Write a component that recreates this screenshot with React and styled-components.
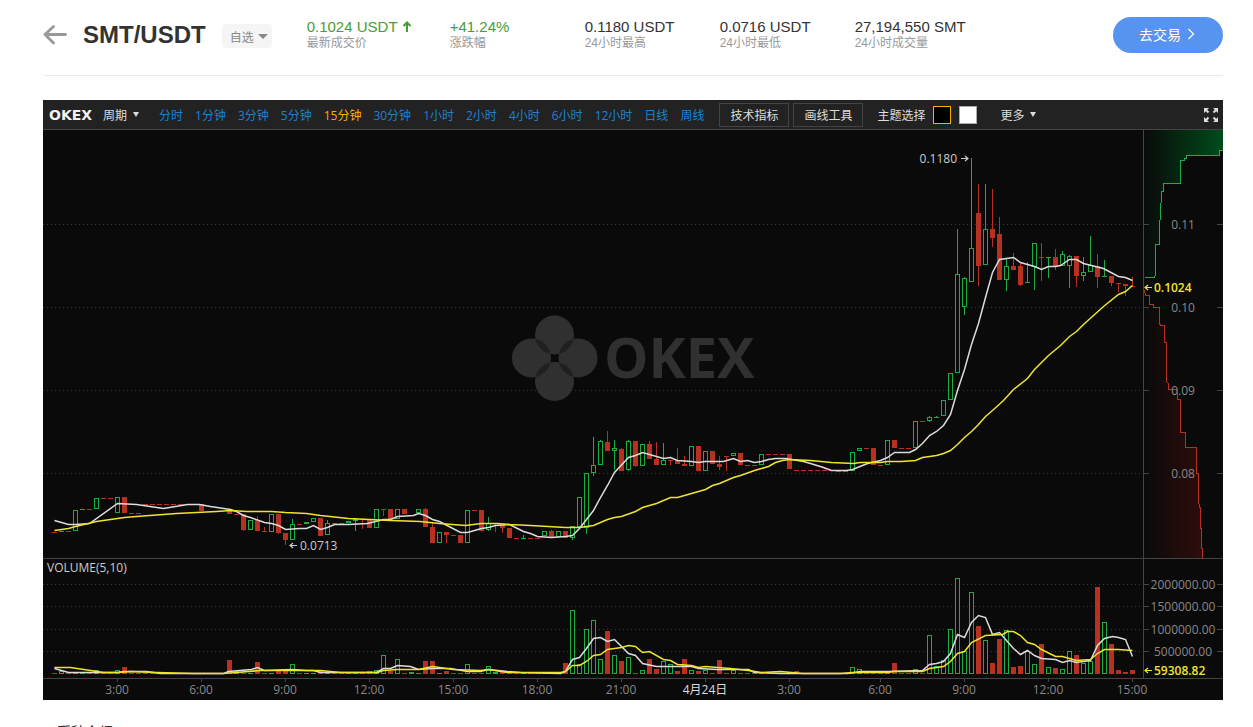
import React from "react";
import styled, { createGlobalStyle } from "styled-components";

const GlobalStyle = createGlobalStyle`
  html { scrollbar-width: none; }
  body {
    margin: 0;
    background: #fff;
    color: #333;
    font-family: "Liberation Sans", "Noto Sans CJK SC", sans-serif;
    font-size: 12px;
  }
  button { font-family: inherit; cursor: pointer; }
`;

const Page = styled.div`
  padding: 0 30px 0 43px;
`;

/* ---------- header ---------- */

const Header = styled.header`
  display: flex;
  align-items: center;
  padding: 17px 0 22px;
  border-bottom: 1px solid #ebebeb;
`;

const BackLink = styled.a`
  display: flex;
  width: 24px;
  margin-right: 16px;
`;

const Title = styled.h1`
  margin: 0 16px 0 0;
  font-size: 24px;
  line-height: 36px;
  color: #333;
`;

const FavButton = styled.button`
  display: flex;
  align-items: center;
  gap: 4px;
  width: 50px;
  height: 24px;
  margin: 2px 35px 0 0;
  padding: 0 0 0 8px;
  border: 0;
  border-radius: 4px;
  background: #f5f5f5;
  color: #888;
  font-size: 12px;
`;

const Stats = styled.dl`
  display: flex;
  flex: 1;
  margin: 0 0 2px;
`;

const Stat = styled.div`
  display: flex;
  flex-direction: column-reverse;
  width: ${(p) => (p.$wide ? "143px" : "135px")};
  white-space: nowrap;
`;

const StatLabel = styled.dt`
  font-size: 12px;
  line-height: 14px;
  color: #999;
`;

const StatValue = styled.dd`
  display: flex;
  align-items: center;
  gap: 4px;
  margin: 0;
  font-size: 15px;
  line-height: 18px;
  color: ${(p) => (p.$up ? "#4a9c35" : "#333")};
`;

const TradeButton = styled.button`
  display: flex;
  align-items: center;
  justify-content: center;
  gap: 6px;
  width: 110px;
  height: 36px;
  padding: 0 2px 2px 0;
  border: 0;
  border-radius: 18px;
  background: #5794f1;
  color: #fff;
  font-size: 14px;
`;

/* ---------- chart ---------- */

const ChartPanel = styled.section`
  margin-top: 24px;
  background: #0a0a0a;
  font-family: "Open Sans", "Noto Sans CJK SC", sans-serif;
`;

const Toolbar = styled.div`
  display: flex;
  align-items: center;
  height: 29px;
  padding: 0 4px 0 6px;
  border-bottom: 1px solid #444;
  background: #222;
  color: #ddd;
  white-space: nowrap;
`;

const Brand = styled.strong`
  width: 54px;
  color: #f2f2f2;
  font-family: "DejaVu Sans", sans-serif;
  font-size: 14px;
`;

const MenuButton = styled.button`
  display: flex;
  align-items: center;
  gap: 6px;
  padding: 0;
  border: 0;
  background: none;
  color: #ddd;
  font-size: 12px;
`;

const Periods = styled.div`
  display: flex;
  gap: 12px;
  margin: 0 15px 0 20px;
`;

const Period = styled.button`
  padding: 0;
  border: 0;
  background: none;
  color: ${(p) => (p.$active ? "#ffab00" : "#1b82d2")};
  font-size: 12px;
`;

const ToolButton = styled.button`
  width: 70px;
  height: 24px;
  margin-right: 4px;
  padding: 0;
  border: 1px solid #444;
  background: transparent;
  color: #ddd;
  font-size: 12px;
`;

const ThemePicker = styled.div`
  display: flex;
  align-items: center;
  gap: 8px;
  margin: 0 23px 0 10px;
`;

const Swatch = styled.button`
  width: 18px;
  height: 18px;
  padding: 0;
  border: 1px solid ${(p) => (p.$active ? "#ffab00" : "#aaa")};
  background: ${(p) => p.$color};
`;

const FullscreenButton = styled.button`
  display: flex;
  margin-left: auto;
  padding: 0;
  border: 0;
  background: none;
`;

const Plot = styled.svg`
  display: block;
  width: 100%;
  height: auto;
  font-family: "Open Sans", "Noto Sans CJK SC", sans-serif;
  font-size: 12px;
`;

const Intro = styled.h2`
  margin: 22px 0 0;
  padding: 0 14px;
  font-size: 14px;
  line-height: 20px;
  font-weight: 400;
`;

/* ---------- data ---------- */

const PERIODS = ["分时", "1分钟", "3分钟", "5分钟", "15分钟", "30分钟", "1小时", "2小时", "4小时", "6小时", "12小时", "日线", "周线"];

const STATS = [
  { label: "最新成交价", value: "0.1024 USDT", up: true, arrow: true },
  { label: "涨跌幅", value: "+41.24%", up: true },
  { label: "24小时最高", value: "0.1180 USDT" },
  { label: "24小时最低", value: "0.0716 USDT" },
  { label: "24小时成交量", value: "27,194,550 SMT" },
];

// [slot, up or down, body top, body bottom, wick top, wick bottom], one slot per 15 minutes
const CANDLES = [
  [0, "r", 532, 532], [1, "g", 531, 531], [2, "r", 531, 531], [3, "g", 510, 530], [4, "g", 509, 509],
  [5, "r", 509, 509], [6, "g", 498, 508], [7, "r", 498, 498], [8, "r", 498, 498], [9, "g", 497, 512],
  [10, "r", 497, 512], [11, "r", 513, 513], [12, "r", 513, 513], [13, "r", 504, 504], [14, "r", 504, 504],
  [15, "r", 504, 504], [16, "r", 504, 504], [17, "r", 504, 504], [18, "r", 504, 504], [21, "r", 504, 510],
  [25, "r", 510, 513], [26, "r", 514, 514], [27, "r", 514, 529, 514, 530], [28, "g", 520, 529],
  [29, "r", 520, 530, 516, 530], [30, "r", 531, 531, 527, 531], [31, "g", 514, 531], [32, "r", 514, 532, 514, 533],
  [33, "r", 533, 539, 533, 544], [34, "g", 524, 539, 519, 539], [35, "r", 524, 524], [36, "g", 522, 523],
  [37, "g", 518, 521], [38, "r", 518, 535], [39, "g", 523, 534, 520, 534], [40, "r", 523, 523], [41, "r", 523, 523],
  [42, "g", 521, 522], [43, "g", 519, 520, 518, 530], [44, "r", 519, 519, 519, 528], [45, "r", 520, 527],
  [46, "g", 509, 527], [47, "r", 509, 509, 509, 515], [48, "r", 509, 518], [49, "g", 509, 518], [50, "r", 509, 513],
  [52, "g", 509, 512], [53, "r", 509, 526, 508, 526], [54, "r", 527, 542, 523, 542], [55, "g", 532, 542],
  [56, "r", 532, 534, 532, 542], [57, "r", 535, 535], [58, "r", 535, 542], [59, "g", 510, 542], [60, "r", 510, 510],
  [61, "r", 510, 530], [62, "g", 523, 529, 517, 530], [63, "r", 523, 523, 523, 531], [64, "r", 525, 527, 525, 532],
  [65, "r", 528, 537], [66, "r", 538, 538], [67, "g", 538, 538, 535, 538], [68, "r", 538, 538], [69, "r", 538, 538],
  [70, "g", 531, 535], [71, "r", 531, 536, 530, 536], [72, "g", 531, 536], [73, "r", 531, 537], [74, "g", 526, 537, 526, 539],
  [75, "g", 497, 526], [76, "g", 473, 527, 473, 533], [77, "g", 465, 472, 437, 475], [78, "g", 441, 464, 440, 464],
  [79, "r", 442, 450, 431, 450], [80, "g", 448, 450, 440, 469], [81, "r", 449, 470, 448, 470], [82, "g", 441, 469, 440, 470],
  [83, "r", 441, 465, 441, 466], [84, "g", 444, 465], [85, "r", 444, 458, 441, 458], [86, "r", 459, 464, 442, 464],
  [87, "g", 460, 464, 443, 464], [88, "r", 460, 460, 460, 464], [89, "r", 460, 463, 448, 463], [90, "r", 464, 465, 456, 465],
  [91, "g", 446, 465], [92, "r", 446, 470], [93, "g", 451, 470], [94, "r", 451, 463], [95, "r", 464, 466, 456, 469],
  [96, "r", 456, 456, 456, 470], [97, "g", 453, 455], [98, "r", 453, 464], [99, "r", 465, 465], [100, "r", 465, 465],
  [101, "g", 454, 464], [102, "r", 454, 454], [103, "r", 454, 454], [104, "r", 454, 454], [105, "r", 454, 468],
  [106, "r", 470, 470], [107, "r", 470, 470], [108, "r", 470, 470], [109, "r", 470, 470], [110, "r", 470, 470],
  [112, "r", 471, 471], [113, "r", 471, 471], [114, "g", 452, 470], [115, "g", 448, 450], [116, "r", 448, 448],
  [117, "r", 448, 464], [118, "r", 465, 465], [119, "g", 440, 464], [120, "r", 440, 447], [121, "r", 448, 448],
  [122, "r", 448, 448], [123, "g", 421, 447], [124, "r", 421, 421], [125, "g", 417, 420, 416, 421], [126, "g", 417, 417, 416, 417],
  [127, "g", 400, 415], [128, "g", 373, 399], [129, "g", 274, 372, 229, 372], [130, "g", 278, 306, 277, 314],
  [131, "g", 248, 281, 158, 281], [132, "r", 213, 265, 184, 285], [133, "g", 229, 264, 184, 264], [134, "r", 229, 237, 189, 246],
  [135, "r", 234, 279, 217, 279], [136, "g", 266, 279, 259, 290], [137, "r", 266, 269, 253, 269], [138, "r", 266, 284, 263, 285],
  [139, "g", 282, 282, 262, 282], [140, "g", 243, 266, 243, 289], [141, "r", 257, 257, 243, 280], [142, "g", 257, 257, 257, 277],
  [143, "r", 257, 265, 249, 269], [144, "g", 254, 265, 251, 265], [145, "g", 256, 265, 255, 287], [146, "r", 256, 275, 256, 286],
  [147, "g", 272, 275, 257, 280], [148, "g", 265, 271, 236, 271], [149, "r", 266, 276, 254, 287], [150, "g", 276, 276, 260, 276],
  [151, "r", 276, 282, 276, 285], [152, "r", 283, 283, 283, 291], [153, "r", 284, 285, 284, 295], [154, "r", 286, 286, 277, 286],
];

// slots whose volume bar rises above the base line: [slot, colour, top]
const VOLUMES = [
  [1, "g", 671], [6, "g", 670], [9, "g", 670], [10, "r", 667], [25, "r", 660], [26, "g", 671], [29, "r", 662],
  [32, "r", 671], [33, "r", 671], [34, "g", 664], [38, "r", 670], [45, "r", 671], [46, "g", 670], [47, "g", 655],
  [48, "r", 671], [49, "g", 659], [51, "g", 672], [53, "r", 661], [54, "r", 661], [56, "r", 671], [59, "g", 664],
  [62, "g", 666], [63, "g", 672], [64, "r", 672], [65, "r", 672], [73, "r", 663], [74, "g", 610], [75, "g", 664],
  [76, "g", 629], [77, "g", 620], [78, "g", 659], [79, "r", 631], [80, "g", 655], [81, "r", 661], [82, "g", 657],
  [84, "g", 670], [85, "r", 659], [86, "r", 669], [87, "g", 661], [88, "g", 664], [89, "r", 671], [90, "r", 659],
  [91, "g", 670], [92, "r", 671], [93, "g", 670], [95, "r", 660], [97, "g", 670], [106, "r", 671], [114, "g", 667],
  [115, "g", 669], [120, "r", 663], [123, "g", 669], [125, "g", 635], [126, "g", 666], [127, "g", 660], [128, "g", 629],
  [129, "g", 578], [130, "g", 651], [131, "g", 592], [132, "r", 626], [133, "g", 640], [134, "r", 663], [135, "r", 639],
  [136, "g", 630], [137, "r", 667], [138, "r", 666], [139, "g", 651], [140, "g", 664], [141, "r", 644], [142, "g", 667],
  [143, "r", 668], [144, "g", 669], [145, "g", 651], [146, "r", 655], [147, "g", 663], [148, "g", 661], [149, "r", 587],
  [150, "g", 622], [151, "r", 644], [152, "r", 670], [153, "r", 672], [154, "r", 670],
];

const PRICE_FAST =
  "54,520 61,522 68,524 75,524 89,523 117,503 136,504 163,508 187,504 199,504 210,506 230,509 236,511 243,515 250,517 264,522 271,523 278,525 285,529 299,528 306,528 313,525 320,529 327,527 334,524 348,524 367,523 383,519 390,519 397,516 413,515 418,513 425,515 432,519 439,521 460,532 467,532 481,528 488,527 495,525 509,524 523,531 530,533 537,536 551,537 565,536 572,535 579,528 586,519 593,510 600,497 607,485 614,472 628,457 635,455 642,452 663,458 670,457 677,460 691,461 698,462 705,461 723,461 733,458 740,461 747,460 754,462 761,461 768,459 775,458 785,458 803,461 810,463 823,467 831,470 846,470 852,469 867,463 880,460 887,457 894,452 909,452 915,449 922,443 929,435 936,431 943,425 950,414 957,390 964,369 971,344 978,323 985,297 992,272 999,259 1013,257 1020,262 1034,266 1041,269 1048,266 1055,266 1060,265 1069,259 1076,259 1083,263 1103,268 1118,276 1125,277 1132,280";

const PRICE_SLOW =
  "54,530 68,528 75,526 96,521 117,518 124,517 136,516 176,513 196,512 216,511 230,510 246,511 266,511 271,511 285,512 306,513 320,515 348,518 369,519 390,520 420,521 439,523 465,525 481,523 497,523 509,524 530,525 565,527 579,527 593,525 607,519 614,517 621,516 635,511 642,507 656,503 670,497 677,497 684,495 705,489 712,485 719,483 733,477 740,475 754,470 761,468 768,466 775,462 782,460 789,459 810,460 831,462 853,463 860,462 880,462 887,461 901,461 915,460 922,457 929,456 936,455 943,453 950,450 957,444 964,437 971,431 978,424 985,416 992,410 1003,400 1013,389 1027,378 1034,369 1048,355 1060,345 1069,336 1076,331 1083,324 1103,306 1118,294 1125,291 1132,285";

const VOLUME_FAST =
  "54,668 68,672 117,672 124,671 146,671 160,673 196,673 223,673 228,671 251,669 257,667 264,670 292,669 306,670 313,670 320,672 376,672 383,668 390,668 397,665 410,666 418,669 432,668 450,668 467,671 480,671 488,669 507,671 520,672 560,673 565,671 572,659 579,657 586,648 593,638 600,637 607,641 614,639 621,646 628,653 635,655 642,663 656,666 691,666 698,668 717,669 748,669 754,672 780,673 847,673 860,671 887,671 922,670 929,664 936,663 943,661 950,653 957,634 964,637 971,622 978,615 985,617 992,634 999,632 1013,648 1020,654 1027,650 1034,655 1041,658 1055,659 1062,662 1069,660 1076,662 1090,660 1097,645 1104,638 1112,636 1118,637 1125,639 1132,656";

const VOLUME_SLOW =
  "54,667 70,667 90,670 103,672 117,672 130,671 156,672 193,673 223,673 236,672 260,670 320,670 340,672 377,672 383,670 397,669 418,669 432,666 453,669 480,670 488,669 507,672 533,672 560,672 565,671 572,665 579,665 586,661 593,655 600,654 607,649 621,647 628,645 635,646 642,652 649,651 663,659 670,660 677,664 691,665 698,667 705,666 730,668 748,670 761,672 780,671 802,673 840,673 852,672 887,672 893,671 922,671 929,668 943,666 950,661 957,653 964,651 971,642 985,635 1002,634 1007,631 1013,631 1020,635 1027,642 1034,644 1041,649 1055,656 1062,656 1076,660 1090,659 1097,653 1104,649 1118,649 1132,650";

const ASKS =
  "1144,277 1154,277 1155,274 1155,244 1159,244 1159,224 1160,215 1161,191 1163,191 1163,183 1180,183 1180,160 1184,160 1184,158 1186,158 1186,155 1219,155 1219,150 1223,150";

const BIDS =
  "1144,290 1145,295 1149,295 1149,304 1153,304 1153,307 1159,307 1159,323 1160,325 1164,325 1164,342 1166,342 1166,381 1168,383 1168,389 1177,389 1177,399 1180,399 1180,432 1185,432 1185,447 1196,447 1196,473 1198,473 1198,499 1199,507 1200,507 1200,528 1201,528 1201,548 1202,548 1202,558";

const PRICE_TICKS = [[224, "0.11"], [307, "0.10"], [390, "0.09"], [473, "0.08"]];
const VOLUME_TICKS = [[584, "2000000.00"], [606, "1500000.00"], [629, "1000000.00"], [651, "500000.00"]];
const TIME_TICKS = [
  [117, "3:00"], [201, "6:00"], [285, "9:00"], [369, "12:00"], [453, "15:00"], [537, "18:00"], [621, "21:00"],
  [705, "4月24日", true], [789, "3:00"], [880, "6:00"], [964, "9:00"], [1048, "12:00"], [1132, "15:00"],
];

const UP = "#1aad46";
const DOWN = "#b83020";
const AXIS = "#444";

/* ---------- drawings ---------- */

const Caret = ({ width, height, color }) => (
  <svg width={width} height={height} viewBox="0 0 10 6" preserveAspectRatio="none" aria-hidden="true">
    <path d="M0 0H10L5 6Z" fill={color} />
  </svg>
);

function Bar({ slot, color, top, bottom }) {
  const x = 52 + slot * 7;
  if (bottom <= top) return <rect x={x} y={top} width="5" height="1" fill={color} />;
  if (color === DOWN) return <rect x={x} y={top} width="5" height={bottom - top + 1} fill={color} />;
  return <rect x={x + 0.5} y={top + 0.5} width="4" height={bottom - top} fill="#0a0a0a" stroke={color} />;
}

function Candle({ data: [slot, dir, top, bottom, high = top, low = bottom] }) {
  const color = dir === "g" ? UP : DOWN;
  return (
    <g shapeRendering="crispEdges">
      <rect x={54 + slot * 7} y={high} width="1" height={low - high + 1} fill={color} />
      <Bar slot={slot} color={color} top={top} bottom={bottom} />
    </g>
  );
}

function Watermark() {
  return (
    <g>
      <clipPath id="petals">
        <circle cx="554.5" cy="335" r="19.5" />
        <circle cx="554.5" cy="381.5" r="19.5" />
      </clipPath>
      <g fill="#303030">
        <circle cx="554.5" cy="335" r="19.5" />
        <circle cx="554.5" cy="381.5" r="19.5" />
        <circle cx="531.5" cy="358" r="19.5" />
        <circle cx="578" cy="358" r="19.5" />
      </g>
      <g fill="#202020" clipPath="url(#petals)">
        <circle cx="531.5" cy="358" r="19.5" />
        <circle cx="578" cy="358" r="19.5" />
      </g>
      <text x="604" y="378" fill="#303030" fontSize="56" fontWeight="700">OKEX</text>
    </g>
  );
}

function LineSeries({ points, color }) {
  return <polyline points={points} transform="translate(0.5 0.5)" fill="none" stroke={color} strokeWidth="1.500" />;
}

function Arrow({ x, y, color, right }) {
  return (
    <path
      d={right ? `M${x} ${y}h7m-3 -2.500l3 2.500l-3 2.500` : `M${x + 8} ${y}h-7m3 -2.500l-3 2.500l3 2.500`}
      fill="none"
      stroke={color}
      strokeWidth="1.2"
    />
  );
}

function PriceChart() {
  const raised = new Map(VOLUMES.map(([slot, dir, top]) => [slot, [dir, top]]));
  const directions = new Map(CANDLES.map(([slot, dir]) => [slot, dir]));
  const slots = Array.from({ length: 155 }, (_, slot) => slot);

  return (
    <Plot viewBox="43 130 1180 570" role="img" aria-label="SMT/USDT">
      <defs>
        <linearGradient id="asks" gradientUnits="userSpaceOnUse" x1="1144" y1="0" x2="1223" y2="0">
          <stop offset="0" stopColor="#0a0a0a" />
          <stop offset="1" stopColor="#004c1a" />
        </linearGradient>
        <linearGradient id="bids" gradientUnits="userSpaceOnUse" x1="1144" y1="0" x2="1223" y2="0">
          <stop offset="0" stopColor="#0a0a0a" />
          <stop offset="1" stopColor="#3a0e0a" />
        </linearGradient>
      </defs>

      <g stroke="#3a3a3a" strokeDasharray="1 3" shapeRendering="crispEdges">
        {[...PRICE_TICKS, ...VOLUME_TICKS].map(([y]) => (
          <line key={y} x1="43" x2="1143" y1={y + 0.5} y2={y + 0.5} />
        ))}
      </g>

      <Watermark />

      <polygon points={`1144,130 ${ASKS} 1223,130`} fill="url(#asks)" />
      <polygon points={`${BIDS} 1144,558`} fill="url(#bids)" />
      <g fill="none" transform="translate(0.5 0.5)" shapeRendering="crispEdges">
        <polyline points={ASKS} stroke={UP} />
        <polyline points={BIDS} stroke={DOWN} />
      </g>

      <g fill={AXIS} shapeRendering="crispEdges">
        <rect x="43" y="558" width="1180" height="1" />
        <rect x="43" y="678" width="1180" height="1" />
        <rect x="1143" y="130" width="1" height="549" />
        {[...PRICE_TICKS, ...VOLUME_TICKS].map(([y]) => (
          <g key={y}>
            <rect x="1144" y={y} width="5" height="1" />
            <rect x="1217" y={y} width="6" height="1" />
          </g>
        ))}
        {TIME_TICKS.map(([x]) => (
          <rect key={x} x={x} y="679" width="1" height="3" />
        ))}
      </g>

      {CANDLES.map((candle) => (
        <Candle key={candle[0]} data={candle} />
      ))}

      <g shapeRendering="crispEdges">
        {slots.map((slot) => {
          const [dir, top] = raised.get(slot) ?? [directions.get(slot) ?? "g", 673];
          return <Bar key={slot} slot={slot} color={dir === "g" ? UP : DOWN} top={top} bottom={673} />;
        })}
      </g>

      <LineSeries points={PRICE_FAST} color="#dcdcdc" />
      <LineSeries points={PRICE_SLOW} color="#efe42c" />
      <LineSeries points={VOLUME_FAST} color="#dcdcdc" />
      <LineSeries points={VOLUME_SLOW} color="#efe42c" />

      <g fill="#888" textAnchor="middle">
        {[...PRICE_TICKS, ...VOLUME_TICKS].map(([y, label]) => (
          <text key={y} x="1183" y={y + 5}>{label}</text>
        ))}
        {TIME_TICKS.map(([x, label, day]) => (
          <text key={x} x={x} y="694" fill={day ? "#ddd" : undefined}>{label}</text>
        ))}
      </g>

      <g fill="#ccc">
        <text x="47" y="572">VOLUME(5,10)</text>
        <text x="957" y="163" textAnchor="end">0.1180</text>
        <text x="300" y="550">0.0713</text>
      </g>
      <Arrow x={961} y={158.5} color="#ccc" right />
      <Arrow x={289} y={545.5} color="#ccc" />

      <g fill="#f0e52c" fontWeight="600">
        <text x="1154" y="292">0.1024</text>
        <text x="1154" y="675">59308.82</text>
      </g>
      <Arrow x={1144} y={287.5} color="#f0e52c" />
      <Arrow x={1144} y={670.5} color="#f0e52c" />
    </Plot>
  );
}

export default function App() {
  return (
    <Page>
      <GlobalStyle />
      <Header>
        <BackLink href="#" aria-label="返回">
          <svg width="24" height="20" viewBox="0 0 24 20" fill="none" stroke="#999" strokeWidth="2.800" strokeLinecap="round" strokeLinejoin="round">
            <path d="M10.500 1.500L2 9.500L10.500 18M2 9.500H22.500" />
          </svg>
        </BackLink>
        <Title>SMT/USDT</Title>
        <FavButton type="button">
          自选 <Caret width={10} height={5} color="#888" />
        </FavButton>
        <Stats>
          {STATS.map(({ label, value, up, arrow }) => (
            <Stat key={label} $wide={arrow}>
              <StatLabel>{label}</StatLabel>
              <StatValue $up={up}>
                {value}
                {arrow && (
                  <svg width="10" height="12" viewBox="0 0 10 12" fill="none" stroke="#4a9c35" strokeWidth="2" aria-hidden="true">
                    <path d="M5 11V2M1.500 5L5 1.500L8.500 5" />
                  </svg>
                )}
              </StatValue>
            </Stat>
          ))}
        </Stats>
        <TradeButton type="button">
          去交易
          <svg width="8" height="12" viewBox="0 0 8 12" fill="none" stroke="#fff" strokeWidth="1.200" aria-hidden="true">
            <path d="M1.500 1L6.500 6L1.500 11" />
          </svg>
        </TradeButton>
      </Header>

      <ChartPanel>
        <Toolbar>
          <Brand>OKEX</Brand>
          <MenuButton type="button">
            周期 <Caret width={6} height={5} color="#ddd" />
          </MenuButton>
          <Periods>
            {PERIODS.map((name) => (
              <Period key={name} type="button" $active={name === "15分钟"}>{name}</Period>
            ))}
          </Periods>
          <ToolButton type="button">技术指标</ToolButton>
          <ToolButton type="button">画线工具</ToolButton>
          <ThemePicker>
            主题选择
            <Swatch type="button" $active $color="#000" aria-label="黑色" />
            <Swatch type="button" $color="#fff" aria-label="白色" />
          </ThemePicker>
          <MenuButton type="button">
            更多 <Caret width={6} height={5} color="#ddd" />
          </MenuButton>
          <FullscreenButton type="button" aria-label="全屏">
            <svg width="16" height="16" viewBox="0 0 16 16" fill="#ddd" stroke="#ddd" strokeWidth="2">
              <path stroke="none" d="M1 1H6L1 6ZM15 1V6L10 1ZM1 15V10L6 15ZM15 15H10L15 10Z" />
              <path d="M3 3L5.500 5.500M13 3L10.500 5.500M3 13L5.500 10.500M13 13L10.500 10.500" />
            </svg>
          </FullscreenButton>
        </Toolbar>
        <PriceChart />
      </ChartPanel>

      <Intro>币种介绍</Intro>
    </Page>
  );
}
